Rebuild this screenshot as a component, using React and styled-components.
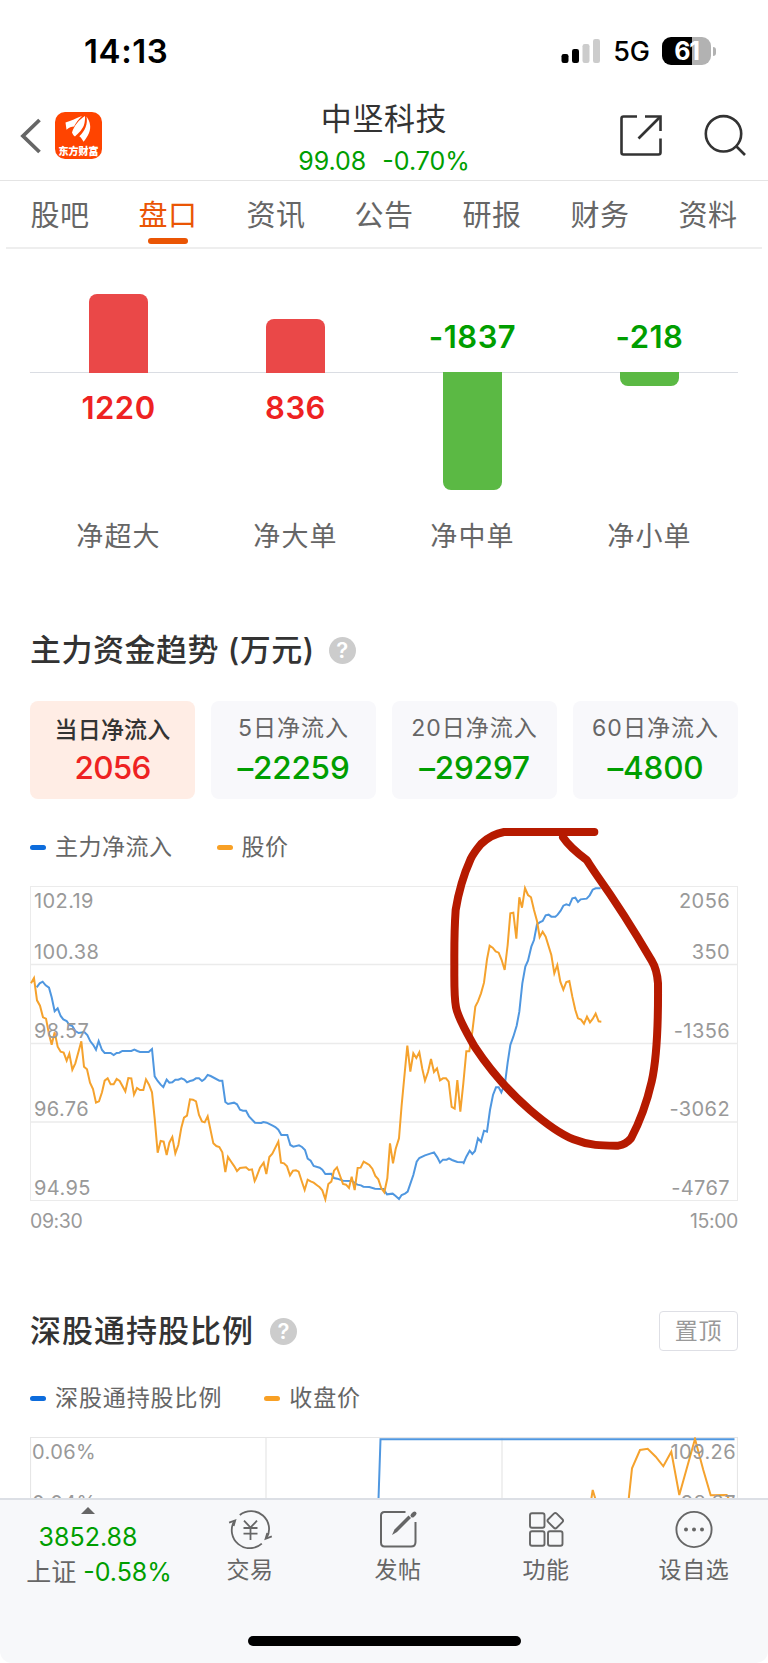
import React from "react"
import styled, { createGlobalStyle } from "styled-components"

const GlobalStyle = createGlobalStyle`
    * {
        box-sizing: border-box;
    }
    body {
        margin: 0;
        background: #ffffff;
        font-family: Inter, "Noto Sans CJK SC", sans-serif;
        color: #666666;
    }
    svg {
        display: block;
    }
`

//Layout
const Screen = styled.div`
    display: flex;
    flex-direction: column;
    width: 768px;
    height: 1663px;
    overflow: hidden;
    background: #ffffff;
`
const Section = styled.section`
    padding: 0 30px;
    margin-top: ${props => props.$top}px;
`

//Status bar
const StatusBar = styled.div`
    display: flex;
    align-items: center;
    justify-content: space-between;
    height: 104px;
    padding: 0 52px 2px 84px;
    color: #000000;
`
const Clock = styled.span`
    font-size: 33px;
    font-weight: 600;
    line-height: 40px;
    letter-spacing: 0.6px;
`
const StatusIcons = styled.div`
    display: flex;
    align-items: center;
`
const Network = styled.span`
    font-size: 27px;
    font-weight: 500;
    line-height: 30px;
    margin: 2px 12px 0 12px;
`
const Battery = styled.div`
    display: flex;
    align-items: center;
    gap: 2px;
`
const BatteryBody = styled.div`
    width: 49px;
    height: 28px;
    border-radius: 9px;
    background: linear-gradient(to right, #000000 61%, #b2b2b2 61%);
    color: #ffffff;
    font-size: 25px;
    font-weight: 700;
    line-height: 28px;
    text-align: center;
    letter-spacing: -1.2px;
`
const BatteryTip = styled.div`
    width: 3px;
    height: 9px;
    border-radius: 0 4px 4px 0;
    background: #b2b2b2;
`

//Header
const Header = styled.header`
    display: grid;
    grid-template-columns: 200px 1fr 200px;
    height: 77px;
    border-bottom: 1px solid #e4e4e4;
`
const HeaderLeft = styled.div`
    display: flex;
    align-items: flex-start;
    gap: 14px;
    padding: 8px 0 0 20px;
`
const HeaderRight = styled.div`
    display: flex;
    justify-content: flex-end;
    align-items: flex-start;
    gap: 40px;
    padding: 9px 21px 0 0;
`
const AppLogo = styled.div`
    display: flex;
    flex-direction: column;
    align-items: center;
    width: 47px;
    height: 47px;
    border-radius: 10px;
    background: #ff4400;
    color: #ffffff;
`
const LogoName = styled.span`
    font-family: "Noto Sans CJK SC", sans-serif;
    font-size: 10px;
    font-weight: 900;
    line-height: 12px;
    white-space: nowrap;
`
const StockTitle = styled.div`
    display: flex;
    flex-direction: column;
    align-items: center;
`
const StockName = styled.h1`
    margin: -1px 0 0;
    font-size: 31px;
    font-weight: 400;
    line-height: 32px;
    letter-spacing: 0.6px;
    color: #333333;
`
const StockPrice = styled.div`
    display: flex;
    gap: 16px;
    font-size: 25px;
    line-height: 32px;
    margin-top: 10px;
    color: #009e00;
`

//Tabs
const Tabs = styled.nav`
    display: grid;
    grid-template-columns: repeat(7, 108px);
    justify-content: center;
    height: 68px;
    margin: 0 6px;
    border-bottom: 2px solid #eeeeee;
`
const Tab = styled.div`
    position: relative;
    text-align: center;
    font-size: 29px;
    line-height: 70px;
    letter-spacing: 0.6px;
    color: ${props => (props.$active ? "#ea5504" : "#666666")};

    &::after {
        content: "";
        display: ${props => (props.$active ? "block" : "none")};
        position: absolute;
        left: 34px;
        top: 57px;
        width: 40px;
        height: 6px;
        border-radius: 3px;
        background: #ea5504;
    }
`

//Order size bars
const FlowGrid = styled.div`
    display: grid;
    grid-template-columns: repeat(4, 1fr);
`
const Upper = styled.div`
    display: flex;
    flex-direction: column;
    align-items: center;
    justify-content: flex-end;
    height: 123px;
`
const Lower = styled.div`
    display: flex;
    flex-direction: column;
    align-items: center;
    height: 146px;
    border-top: 1px solid #dadde3;
`
const Bar = styled.div`
    width: 59px;
    height: ${props => props.$size}px;
    margin: ${props => (props.$up ? "0 0 -1px" : "-1px 0 0")};
    border-radius: ${props => (props.$up ? "8px 8px 0 0" : "0 0 8px 8px")};
    background: ${props => (props.$up ? "#ea4848" : "#5bb944")};
    z-index: 1;
`
const FlowValue = styled.span`
    font-size: 31px;
    font-weight: 600;
    line-height: 36px;
    letter-spacing: 0.5px;
    margin: ${props => (props.$up ? "17px 0 0" : "0 0 17px")};
    color: ${props => (props.$up ? "#ee2222" : "#009e00")};
`
const FlowLabel = styled.div`
    text-align: center;
    font-size: 27px;
    line-height: 38px;
    letter-spacing: 1.2px;
`

//Section headings
const HeadingRow = styled.div`
    display: flex;
    align-items: center;
    height: 40px;
`
const Heading = styled.h2`
    margin: 0;
    font-size: 31px;
    font-weight: 500;
    line-height: 40px;
    letter-spacing: ${props => props.$spacing || 0}px;
    color: #333333;
`
const Help = styled.span`
    width: 27px;
    height: 27px;
    margin-left: ${props => props.$gap}px;
    border-radius: 50%;
    background: #cccccc;
    color: #ffffff;
    font-size: 22px;
    font-weight: 600;
    line-height: 27px;
    text-align: center;
`
const PinButton = styled.button`
    width: 79px;
    height: 40px;
    margin-left: auto;
    padding: 0;
    border: 1px solid #dedfe5;
    border-radius: 4px;
    background: #ffffff;
    color: #999999;
    font-family: inherit;
    font-size: 23px;
    letter-spacing: 0.8px;
    line-height: 38px;
`

//Period cards
const Cards = styled.div`
    display: grid;
    grid-template-columns: repeat(4, 165px);
    justify-content: space-between;
    margin-top: 31px;
`
const Card = styled.div`
    height: 98px;
    padding-top: ${props => (props.$active ? 13 : 11)}px;
    border-radius: 8px;
    background: ${props => (props.$active ? "#ffede5" : "#f8f8fb")};
    text-align: center;
`
const CardLabel = styled.div`
    font-size: 23px;
    font-weight: ${props => (props.$active ? 500 : 400)};
    line-height: 32px;
    letter-spacing: ${props => (props.$active ? 0.2 : 1)}px;
    color: ${props => (props.$active ? "#333333" : "#666666")};
`
const CardValue = styled.div`
    margin-top: ${props => (props.$active ? 3 : 5)}px;
    font-size: 31.5px;
    font-weight: 500;
    line-height: 38px;
    letter-spacing: ${props => (props.$active ? -0.8 : -0.2)}px;
    color: ${props => (props.$active ? "#ee2222" : "#009e00")};
`

//Legend
const Legend = styled.div`
    display: flex;
    align-items: center;
    height: 32px;
    gap: ${props => props.$gap}px;
    letter-spacing: ${props => props.$spacing}px;
`
const LegendItem = styled.div`
    display: flex;
    align-items: center;
    gap: 9px;
    font-size: 23px;
    line-height: 32px;

    &::before {
        content: "";
        width: 16px;
        height: 5px;
        border-radius: 3px;
        background: ${props => props.$color};
    }
`

//Charts
const TrendSvg = styled.svg`
    width: 708px;
    height: 316px;
    margin-top: 23px;
    overflow: visible;
`
const RatioSvg = styled.svg`
    width: 708px;
    height: 61px;
    margin-top: 23px;
`
const AxisText = styled.text`
    font-family: Inter, sans-serif;
    font-size: 20px;
    letter-spacing: 0.4px;
    fill: #999999;
`
const TimeRow = styled.div`
    display: flex;
    justify-content: space-between;
    margin-top: 3px;
    font-size: 19.5px;
    line-height: 32px;
    letter-spacing: -0.4px;
    color: #999999;
`

//Bottom bar
const BottomBar = styled.footer`
    display: flex;
    flex-direction: column;
    align-items: center;
    height: 165px;
    border-top: 2px solid #dcdfe5;
    border-radius: 0 0 12px 12px;
    background: #f7f8fa;
`
const BottomItems = styled.div`
    display: grid;
    grid-template-columns: 176px repeat(4, 148px);
    height: 136px;
`
const IndexBox = styled.div`
    display: flex;
    flex-direction: column;
    align-items: center;
    padding-top: 7px;
    font-size: 25px;
    color: #009e00;
`
const IndexValue = styled.div`
    line-height: 30px;
    margin-top: 8px;
`
const IndexChange = styled.div`
    display: flex;
    gap: 7px;
    margin: 4px -12px 0 10px;
    line-height: 32px;
    white-space: nowrap;
`
const IndexName = styled.span`
    color: #666666;
`
const BottomItem = styled.div`
    display: flex;
    flex-direction: column;
    align-items: center;
    padding-top: 9px;
    font-size: 23px;
    line-height: 32px;
    letter-spacing: 0.6px;

    svg {
        margin-bottom: 5px;
    }
`
const HomeIndicator = styled.div`
    width: 273px;
    height: 10px;
    border-radius: 5px;
    background: #000000;
`

const tabs = ["股吧", "盘口", "资讯", "公告", "研报", "财务", "资料"]

const flows = [
    { label: "净超大", value: 1220, size: 79 },
    { label: "净大单", value: 836, size: 54 },
    { label: "净中单", value: -1837, size: 118 },
    { label: "净小单", value: -218, size: 14 },
]

const periods = [
    { label: "当日净流入", value: "2056" },
    { label: "5日净流入", value: "–22259" },
    { label: "20日净流入", value: "–29297" },
    { label: "60日净流入", value: "–4800" },
]

const inflowLine =
    "110,352 119,340 128,335 137,346 147,353 155,382 164,424 173,415 182,438 190,448 200,453 208,465 217,468 226,483 236,489 253,486 262,495 271,514 280,525 288,539 296,513 306,540 314,549 332,549 341,555 350,549 358,548 367,543 394,543 403,539 412,543 420,546 446,546 456,537 464,619 473,633 482,644 490,651 500,629 508,638 517,637 526,629 535,629 544,625 553,629 561,637 570,633 579,631 588,625 597,625 606,633 614,627 623,615 632,618 658,632 667,632 676,696 684,702 702,698 711,703 720,719 729,722 738,722 747,739 765,758 784,759 790,756 800,758 818,767 826,771 835,779 844,795 862,795 871,825 880,830 897,826 906,831 915,840 923,866 932,872 941,888 959,893 967,899 976,912 994,911 1002,924 1012,926 1029,932 1056,933 1072,944 1083,946 1090,950 1108,951 1125,956 1150,957 1161,973 1178,971 1187,978 1197,987 1205,975 1215,971 1223,965 1240,915 1250,875 1258,864 1275,856 1302,847 1312,862 1320,878 1329,869 1340,869 1347,865 1356,870 1372,876 1389,877 1391,879 1399,860 1409,842 1417,852 1425,843 1434,805 1443,815 1452,782 1461,785 1470,720 1479,675 1488,652 1496,652 1504,667 1515,640 1523,578 1531,525 1540,500 1550,467 1558,425 1567,340 1576,290 1584,272 1594,230 1602,210 1611,163 1619,157 1628,153 1637,136 1646,134 1654,140 1666,140 1673,134 1682,122 1690,107 1699,103 1708,106 1717,85 1726,83 1734,96 1742,88 1760,86 1769,76 1778,59 1787,55 1802,55"

const priceLine =
    "93,340 102,324 111,391 120,407 129,442 138,446 147,492 155,524 164,487 173,530 182,545 191,548 200,572 208,551 217,599 226,580 244,514 252,590 261,598 270,638 279,657 288,698 297,694 306,667 314,632 323,625 332,643 341,643 350,627 359,633 376,664 385,624 394,625 402,674 411,654 420,660 430,660 438,628 447,644 456,667 464,745 473,848 482,813 491,815 500,855 508,818 517,801 526,850 535,825 544,773 552,743 561,737 570,688 579,689 588,694 597,735 606,754 614,757 623,739 640,820 649,828 658,831 667,847 676,906 684,861 694,876 703,889 711,903 720,894 738,892 747,900 756,898 764,933 768,925 780,893 791,878 799,912 808,861 817,851 835,815 843,878 852,880 861,889 870,916 879,902 888,901 896,905 905,933 914,960 923,929 932,934 941,938 950,945 959,952 967,961 976,988 985,942 994,935 1002,902 1011,892 1029,942 1038,944 1047,954 1055,920 1064,960 1073,894 1082,893 1091,875 1100,880 1108,885 1117,896 1126,918 1135,928 1144,955 1153,967 1162,925 1170,820 1179,880 1187,837 1197,805 1205,705 1214,610 1222,527 1231,605 1240,550 1249,564 1258,547 1267,597 1275,632 1284,606 1293,567 1302,606 1311,595 1320,631 1329,625 1338,625 1346,635 1355,711 1364,716 1372,630 1381,725 1390,640 1399,544 1408,544 1417,485 1426,410 1434,394 1443,370 1452,338 1461,268 1469,227 1478,233 1487,244 1496,248 1505,270 1514,300 1523,225 1531,130 1540,128 1549,206 1558,82 1566,113 1575,54 1584,75 1593,82 1602,120 1611,153 1619,201 1628,185 1637,200 1654,255 1663,310 1672,285 1681,335 1690,359 1699,336 1708,333 1717,380 1726,420 1734,445 1743,449 1752,461 1761,440 1770,457 1778,447 1787,431 1796,454 1804,455"

const SignalIcon = () => (
    <svg width="40" height="26" viewBox="0 0 40 26">
        <rect x="0.5" y="16" width="7" height="9" rx="2.2" fill="#000" />
        <rect x="11" y="11" width="7" height="14" rx="2.2" fill="#000" />
        <rect x="21.5" y="6" width="7" height="19" rx="2.2" fill="#ccc" />
        <rect x="32" y="1" width="7" height="24" rx="2.2" fill="#ccc" />
    </svg>
)

const BackIcon = () => (
    <svg width="21" height="48" viewBox="20 112 21 48" fill="none" stroke="#666" strokeWidth="3.8">
        <path d="M39.5 120 L23 136 L39.5 152" />
    </svg>
)

const LogoMark = () => (
    <svg width="47" height="33" viewBox="0 0 47 33" fill="#fff">
        <path d="M10.5 10.5 C15 9.5 21 6 27 4 C23.500 7 21 11 19 14.500 C16.500 14.500 14 15.500 11.500 17.800 Z" />
        <path d="M30 4 C24 7.500 19 14 17 20.500 C17.500 22 18.500 23.500 20 24.500 C23 21.500 28.500 17 29.500 11 C30 8.500 30.200 6 30 4Z" />
        <path d="M31.500 4.500 C35 9.500 36.500 15 34 21 C32.500 24.500 30.500 27.500 28.500 29.800 C27.500 27.500 26 25.500 24.300 24.200 C30 19 33 12 31.500 4.500Z" />
    </svg>
)

const ShareIcon = () => (
    <svg width="44" height="44" viewBox="0 0 44 44" fill="none" stroke="#333" strokeWidth="2.6">
        <path d="M18 3.5 H4.5 Q2.5 3.5 2.5 5.5 V39.5 Q2.5 41.5 4.5 41.5 H39.5 Q41.5 41.5 41.5 39.5 V25.5" />
        <path d="M26 3.5 H41.5 V18" />
        <path d="M41 4 L19.5 25.5" />
    </svg>
)

const SearchIcon = () => (
    <svg width="44" height="44" viewBox="0 0 44 44" fill="none" stroke="#333" strokeWidth="2.6">
        <circle cx="20.5" cy="20.8" r="17.7" />
        <path d="M33 33 L42 42" />
    </svg>
)

const TradeIcon = () => (
    <svg width="46" height="40" viewBox="0 0 46 40" fill="none" stroke="#666" strokeWidth="1.8">
        <path d="M12.8 6 A18 18 0 0 1 39.5 29.300" />
        <path d="M34.8 34.6 A18 18 0 0 1 7.300 12" />
        <path d="M2.100 13.700 L8.200 11.500 L6.600 17" />
        <path d="M44.800 27.300 L38.600 29.800 L40.300 24" />
        <path d="M17 11.700 L23.500 18.500 L30 11.700 M16.500 19 H30.500 M16.500 24.700 H30.500 M23.500 18.500 V31" />
    </svg>
)

const PostIcon = () => (
    <svg width="40" height="40" viewBox="-0.5 0 40 40" fill="none" stroke="#666" strokeWidth="2">
        <path d="M27 3 H6 Q2.5 3 2.5 6.5 V33.5 Q2.5 37.5 6 37.5 H32.500 Q37 37.5 37 33 V13" />
        <path d="M13.5 26 L16 20.5 L30 6.500 L32.500 9 L18.5 23 Z" fill="#666" stroke="none" />
        <path d="M34 6.500 L36 4.5" strokeWidth="4" strokeLinecap="round" />
    </svg>
)

const FeatureIcon = () => (
    <svg width="38" height="40" viewBox="-0.5 0 38 40" fill="none" stroke="#666" strokeWidth="1.9">
        <rect x="2.5" y="4.3" width="14.5" height="14.5" rx="2" />
        <rect x="2.5" y="22.200" width="14.5" height="14.5" rx="2" />
        <rect x="20.5" y="22.200" width="14.5" height="14.5" rx="2" />
        <rect x="21.8" y="5.700" width="12" height="12" rx="2" transform="rotate(45 27.8 11.7)" />
    </svg>
)

const MoreIcon = () => (
    <svg width="40" height="40" viewBox="0 0 40 40" fill="none" stroke="#666" strokeWidth="1.9">
        <circle cx="20" cy="20.500" r="17.600" />
        <g fill="#666" stroke="none">
            <circle cx="12" cy="20.500" r="2" />
            <circle cx="20" cy="20.500" r="2" />
            <circle cx="28" cy="20.500" r="2" />
        </g>
    </svg>
)

//intraday chart, lines use a grid three times finer than the pixels
const TrendChart = () => (
    <TrendSvg viewBox="0 0 708 316">
        <g fill="none" stroke="#ebebeb" strokeWidth="1">
            <rect x="0.5" y="0.5" width="707" height="314" />
            <path d="M0 78.5 H708 M0 157.5 H708 M0 236 H708" strokeWidth="1.3" />
        </g>
        <g transform="scale(0.33333) translate(-90 -48)" fill="none" strokeWidth="6">
            <polyline points={inflowLine} stroke="#4f97e0" />
            <polyline points={priceLine} stroke="#f5a22d" />
        </g>
        <AxisText x="4" y="21.5">102.19</AxisText>
        <AxisText x="4" y="72.8">100.38</AxisText>
        <AxisText x="4" y="151.5">98.57</AxisText>
        <AxisText x="4" y="230">96.76</AxisText>
        <AxisText x="4" y="308.5">94.95</AxisText>
        <AxisText x="700" y="21.5" textAnchor="end">2056</AxisText>
        <AxisText x="700" y="72.8" textAnchor="end">350</AxisText>
        <AxisText x="700" y="151.5" textAnchor="end">-1356</AxisText>
        <AxisText x="700" y="230" textAnchor="end">-3062</AxisText>
        <AxisText x="700" y="308.5" textAnchor="end">-4767</AxisText>
        <path
            transform="scale(0.33333) translate(1230 -228)"
            d="M463 66 H192 C168 70 140 86 123 102 C108 120 100 130 92 147 C66 205 55 250 47 300 C42 370 43 420 43 470 C43 530 42 560 48 592 C54 625 80 668 105 712 C150 780 195 835 270 900 C320 943 360 972 400 988 C450 1008 490 1007 535 1007 C552 1004 562 998 573 985 C600 935 620 880 635 815 C652 740 655 640 654 520 C652 490 646 470 635 452 C590 375 520 265 470 195 C456 175 448 162 440 150 C410 128 385 106 369 82"
            fill="none"
            stroke="#b61a00"
            strokeWidth="24"
            strokeLinecap="round"
            strokeLinejoin="round"
        />
    </TrendSvg>
)

const RatioChart = () => (
    <RatioSvg viewBox="0 0 708 61">
        <path d="M0.5 61 V0.5 H707.5 V61 M236 0 V61 M472 0 V61" fill="none" stroke="#e6e6e6" strokeWidth="1.2" />
        <polyline points="348.5,62 350.5,2.2 704.5,2.2" fill="none" stroke="#4f97e0" strokeWidth="2" />
        <polyline points="561,64 562.7,53 566,64" fill="none" stroke="#f5a22d" strokeWidth="2" />
        <polyline
            points="598.5,64 602,31.3 610,13 617.7,11.7 625.7,19.7 633.3,29.3 641.3,14.7 649.3,58 665,2 673.3,33 680.7,58.3 696.7,58 700,64"
            fill="none"
            stroke="#f5a22d"
            strokeWidth="2"
        />
        <AxisText x="2" y="21.5">0.06%</AxisText>
        <AxisText x="2" y="73">0.04%</AxisText>
        <AxisText x="706" y="21.5" textAnchor="end">109.26</AxisText>
        <AxisText x="706" y="73" textAnchor="end">98.87</AxisText>
    </RatioSvg>
)

const App = () => {
    return (
        <>
            <GlobalStyle />
            <Screen>
                <StatusBar>
                    <Clock>14:13</Clock>
                    <StatusIcons>
                        <SignalIcon />
                        <Network>5G</Network>
                        <Battery>
                            <BatteryBody>61</BatteryBody>
                            <BatteryTip />
                        </Battery>
                    </StatusIcons>
                </StatusBar>

                <Header>
                    <HeaderLeft>
                        <BackIcon />
                        <AppLogo>
                            <LogoMark />
                            <LogoName>东方财富</LogoName>
                        </AppLogo>
                    </HeaderLeft>
                    <StockTitle>
                        <StockName>中坚科技</StockName>
                        <StockPrice>
                            <span>99.08</span>
                            <span>-0.70%</span>
                        </StockPrice>
                    </StockTitle>
                    <HeaderRight>
                        <ShareIcon />
                        <SearchIcon />
                    </HeaderRight>
                </Header>

                <Tabs>
                    {tabs.map(tab => (
                        <Tab key={tab} $active={tab === "盘口"}>{tab}</Tab>
                    ))}
                </Tabs>

                <Section $top={0}>
                    <FlowGrid>
                        {flows.map(({ label, value, size }) => {
                            const up = value > 0
                            const bar = <Bar $up={up} $size={size} />
                            const text = <FlowValue $up={up}>{value}</FlowValue>
                            return (
                                <div key={label}>
                                    <Upper>{up ? bar : text}</Upper>
                                    <Lower>{up ? text : bar}</Lower>
                                    <FlowLabel>{label}</FlowLabel>
                                </div>
                            )
                        })}
                    </FlowGrid>
                </Section>

                <Section $top={74}>
                    <HeadingRow>
                        <Heading $spacing={0.5}>主力资金趋势 (万元)</Heading>
                        <Help $gap={14}>?</Help>
                    </HeadingRow>
                    <Cards>
                        {periods.map(({ label, value }, i) => (
                            <Card key={label} $active={i === 0}>
                                <CardLabel $active={i === 0}>{label}</CardLabel>
                                <CardValue $active={i === 0}>{value}</CardValue>
                            </Card>
                        ))}
                    </Cards>
                </Section>

                <Section $top={32}>
                    <Legend $gap={44} $spacing={0.5}>
                        <LegendItem $color="#0d6cdc">主力净流入</LegendItem>
                        <LegendItem $color="#f8a025">股价</LegendItem>
                    </Legend>
                    <TrendChart />
                    <TimeRow>
                        <span>09:30</span>
                        <span>15:00</span>
                    </TimeRow>
                </Section>

                <Section $top={74}>
                    <HeadingRow>
                        <Heading $spacing={1}>深股通持股比例</Heading>
                        <Help $gap={16}>?</Help>
                        <PinButton>置顶</PinButton>
                    </HeadingRow>
                </Section>

                <Section $top={31}>
                    <Legend $gap={42} $spacing={0.9}>
                        <LegendItem $color="#0d6cdc">深股通持股比例</LegendItem>
                        <LegendItem $color="#f8a025">收盘价</LegendItem>
                    </Legend>
                    <RatioChart />
                </Section>

                <BottomBar>
                    <BottomItems>
                        <IndexBox>
                            <svg width="14" height="7" viewBox="0 0 14 7">
                                <path d="M7 0 L14 7 H0 Z" fill="#666" />
                            </svg>
                            <IndexValue>3852.88</IndexValue>
                            <IndexChange>
                                <IndexName>上证</IndexName>
                                <span>-0.58%</span>
                            </IndexChange>
                        </IndexBox>
                        <BottomItem><TradeIcon />交易</BottomItem>
                        <BottomItem><PostIcon />发帖</BottomItem>
                        <BottomItem><FeatureIcon />功能</BottomItem>
                        <BottomItem><MoreIcon />设自选</BottomItem>
                    </BottomItems>
                    <HomeIndicator />
                </BottomBar>
            </Screen>
        </>
    )
}

export default App
